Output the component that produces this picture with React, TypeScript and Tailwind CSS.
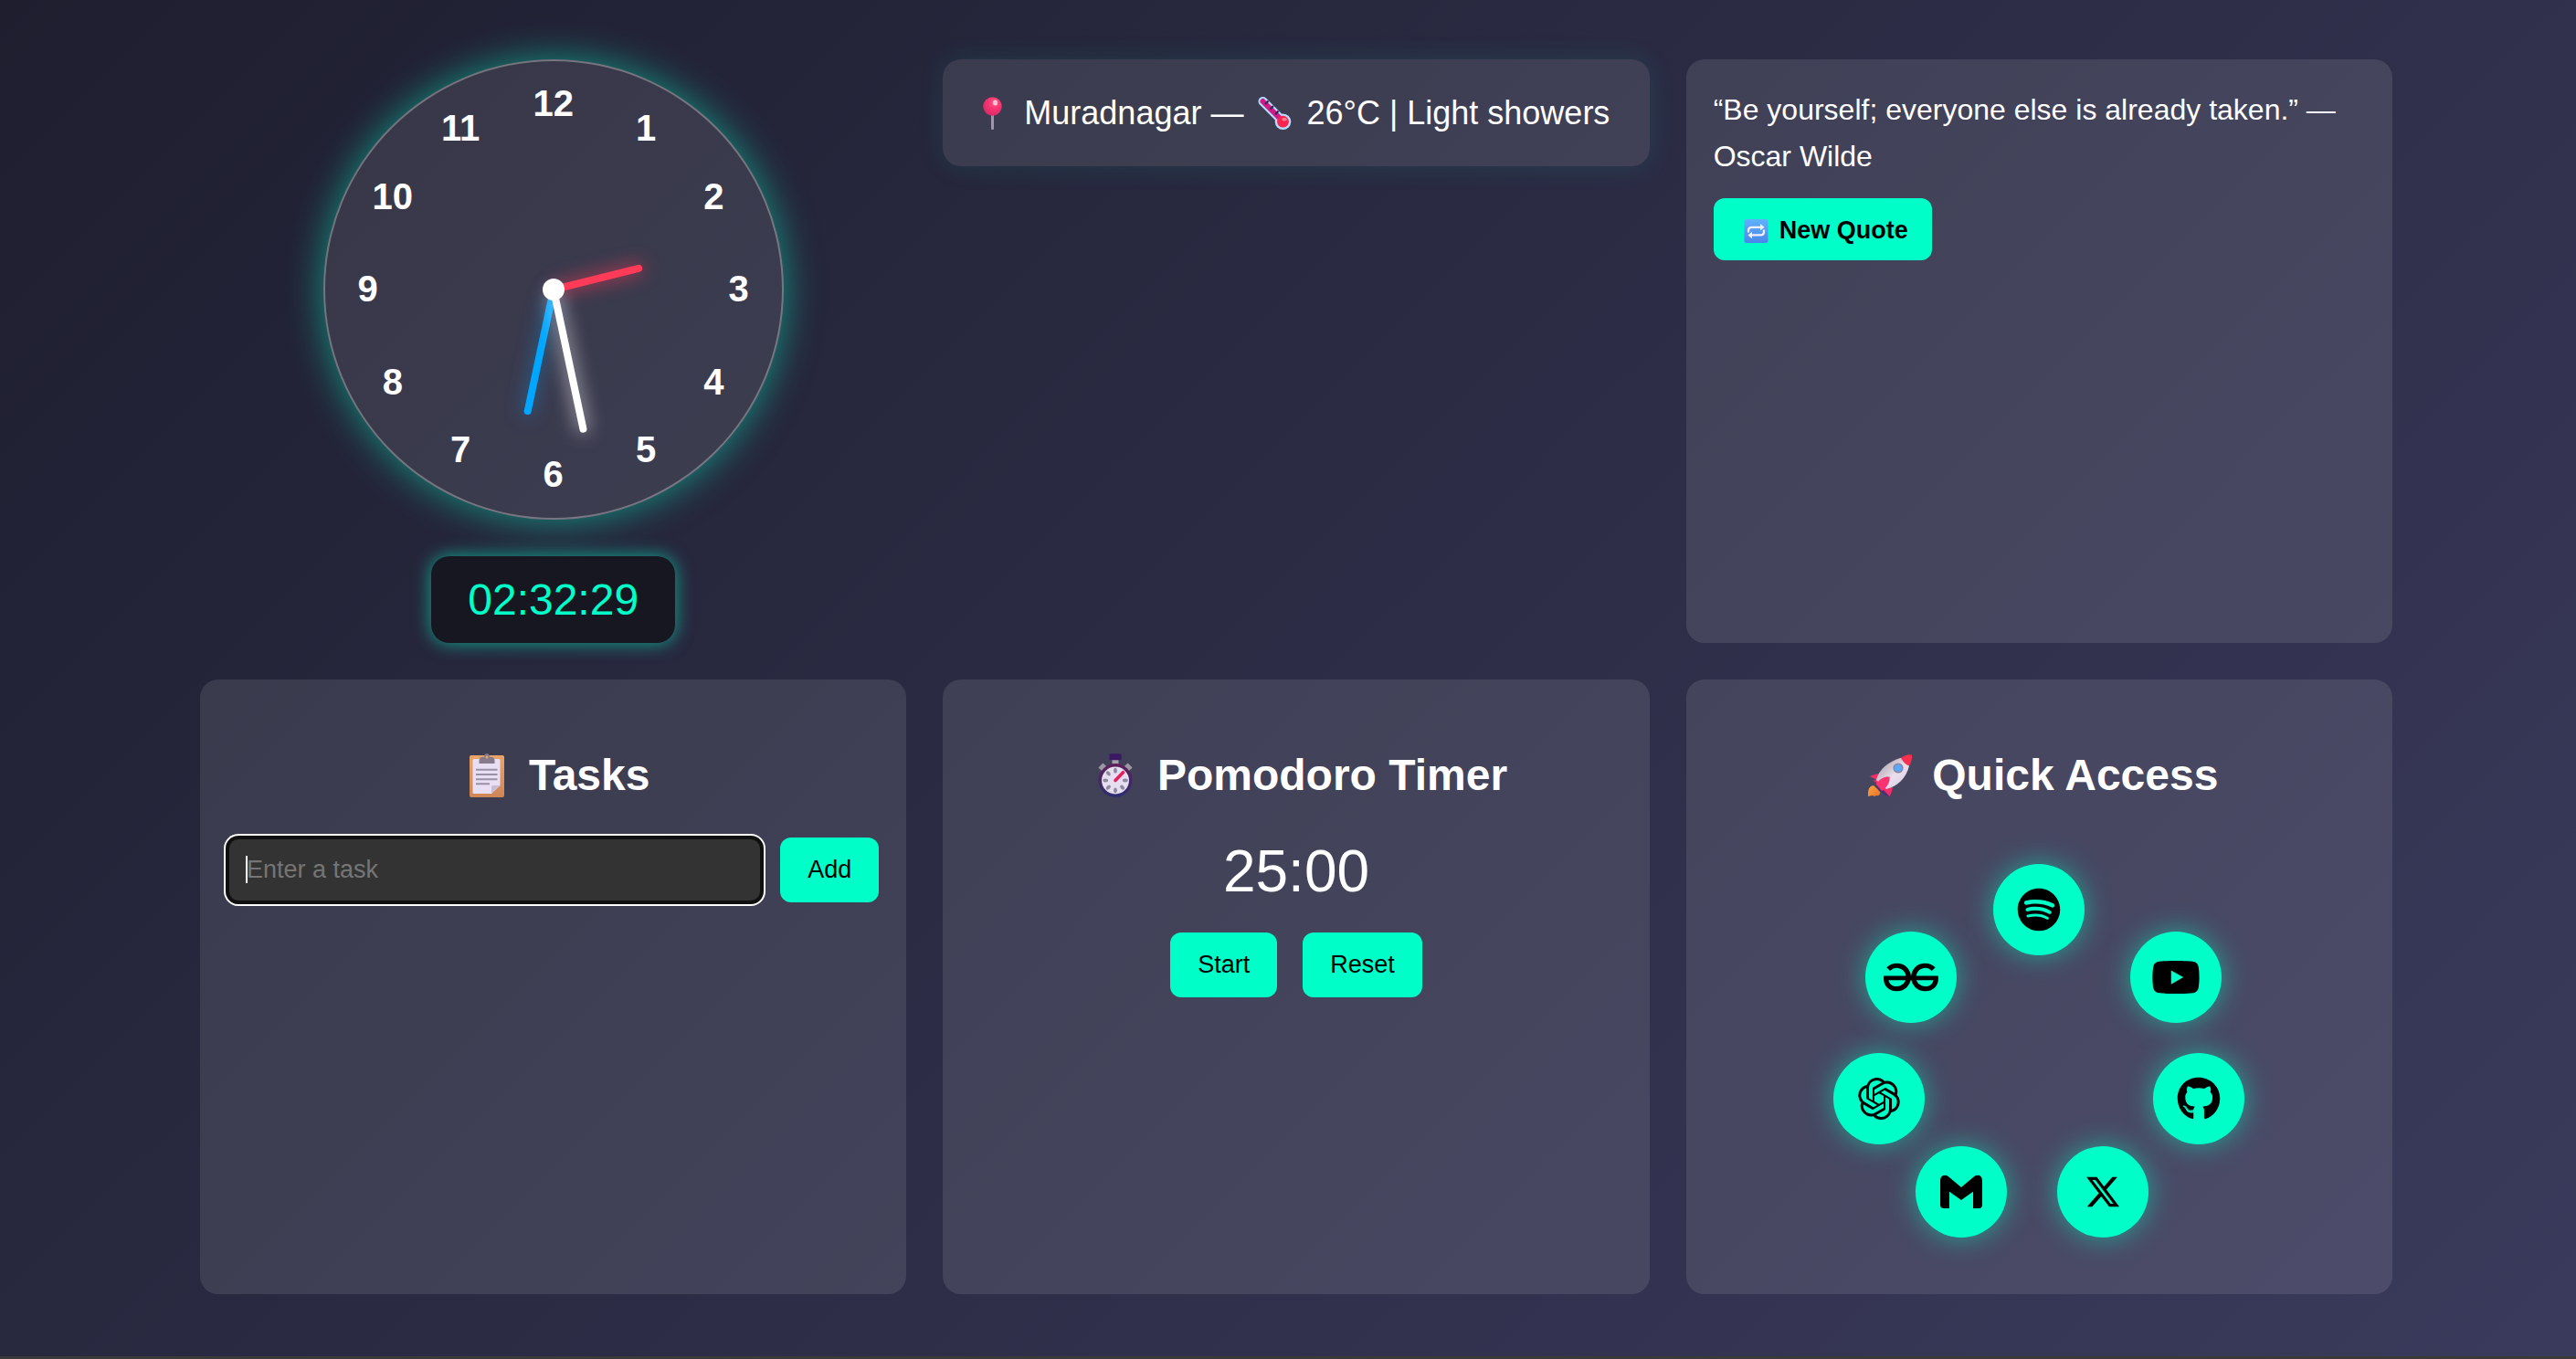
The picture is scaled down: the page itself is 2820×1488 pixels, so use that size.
import type { ReactNode } from "react";
import { FaGithub, FaSpotify, FaXTwitter, FaYoutube } from "react-icons/fa6";
import { SiGeeksforgeeks, SiOpenai } from "react-icons/si";

const NUMBERS = [1, 2, 3, 4, 5, 6, 7, 8, 9, 10, 11, 12];
const CARD = "rounded-[20px] bg-white/10";
const BUTTON = "h-[71px] rounded-xl bg-[#00ffc8] px-[30px] text-[27px] leading-[31px] text-black";

function PinIcon() {
  return (
    <svg viewBox="0 0 49 36" className="h-9 w-[49px] shrink-0" aria-hidden="true">
      <defs>
        <radialGradient id="pin" cx="0.62" cy="0.3" r="0.75">
          <stop offset="0" stopColor="#ff5a86" />
          <stop offset="0.5" stopColor="#f5336f" />
          <stop offset="1" stopColor="#d92b66" />
        </radialGradient>
      </defs>
      <rect x="23" y="18" width="3" height="18" rx="1.2" fill="#a394ae" />
      <circle cx="24.5" cy="10.5" r="10.2" fill="url(#pin)" />
      <ellipse cx="27.5" cy="6.5" rx="2.6" ry="2.9" fill="#ffc4d6" />
    </svg>
  );
}

function ThermometerIcon() {
  return (
    <svg viewBox="0 0 49 36" className="h-9 w-[49px] shrink-0" aria-hidden="true">
      <g transform="translate(6.5 0)">
        <path d="M5 5 L27 27" stroke="#b5dcff" strokeWidth="10" strokeLinecap="round" />
        <circle cx="27" cy="27.2" r="8.8" fill="#b5dcff" />
        <path d="M5 5 L26 26" stroke="#d11a86" strokeWidth="6" strokeLinecap="round" />
        <path d="M7.5 8 L11 4.4 M13 13.6 L16.5 10 M18.6 19.2 L22 15.6" stroke="#352551" strokeWidth="2.2" />
        <circle cx="27" cy="27.2" r="6.4" fill="#f8264f" />
        <ellipse cx="28.6" cy="24.8" rx="2.8" ry="1.8" fill="#ff7d93" />
      </g>
    </svg>
  );
}

function RepeatIcon() {
  return (
    <svg viewBox="0 0 35 26" className="h-[26px] w-[35px] shrink-0" aria-hidden="true">
      <defs>
        <linearGradient id="repeat" x1="0" y1="0" x2="0" y2="1">
          <stop offset="0" stopColor="#5fb2fb" />
          <stop offset="1" stopColor="#4a86ea" />
        </linearGradient>
      </defs>
      <rect x="3.5" width="26" height="26" rx="2.5" fill="url(#repeat)" />
      <g fill="none" stroke="#f3eefb" strokeWidth="2.2">
        <path d="M8 14.5 V12.5 Q8 8.8 11.7 8.8 H22" />
        <path d="M25 11.5 V13.5 Q25 17.4 21.3 17.4 H11" />
      </g>
      <path d="M21 5 L25.6 8.8 L21 12.4Z M12 13.8 L7.4 17.4 L12 21.2Z" fill="#f3eefb" />
    </svg>
  );
}

function ClipboardIcon() {
  return (
    <svg viewBox="0 0 66 48" className="h-12 w-[66px] shrink-0" aria-hidden="true">
      <defs>
        <linearGradient id="board" x1="0" y1="0" x2="0" y2="1">
          <stop offset="0" stopColor="#eba56a" />
          <stop offset="1" stopColor="#cf8656" />
        </linearGradient>
      </defs>
      <g transform="translate(9 0)">
        <rect x="5" y="2" width="38" height="46" rx="2" fill="url(#board)" />
        <path d="M10 6 H37 Q38.500 6 38.500 7.500 V35 L29 44 H10 Q8.500 44 8.500 42.500 V7.500 Q8.500 6 10 6Z" fill="#e8dff4" />
        <path d="M38.500 35 L29 44 V36.500 Q29 35 30.500 35Z" fill="#c6bdd3" />
        <path d="M12 17.700 H35.500 M12 23 H35.500 M12 28.300 H35.500 M12 33.300 H27" stroke="#9a90a5" strokeWidth="2" />
        <path d="M15.500 11 V8 Q15.500 3.700 20 3.700 H21 Q21.500 0 24 0 Q26.500 0 27 3.700 H28 Q32.500 3.700 32.500 8 V11Z" fill="#857b8a" />
        <circle cx="24" cy="4" r="1.5" fill="#eba56a" />
      </g>
    </svg>
  );
}

function StopwatchIcon() {
  const ticks = [0, 90, 135, 180, 225, 270, 315];
  return (
    <svg viewBox="0 0 66 48" className="h-12 w-[66px] shrink-0" aria-hidden="true">
      <defs>
        <linearGradient id="rim" x1="0" y1="0" x2="0" y2="1">
          <stop offset="0" stopColor="#5f1f58" />
          <stop offset="1" stopColor="#2c2f70" />
        </linearGradient>
      </defs>
      <g transform="translate(9 0)">
        <rect x="20.500" y="6" width="7" height="6" fill="#a5a0ad" />
        <rect x="17.300" y="0.300" width="13.400" height="7" rx="1.500" fill="#3b1a63" />
        <path d="M7.500 17.500 L12.500 12.500 M40.500 17.500 L35.500 12.500" stroke="#9c98a3" strokeWidth="6" />
        <circle cx="24" cy="29.500" r="18.500" fill="url(#rim)" />
        <circle cx="24" cy="29.500" r="15" fill="#e6dff0" />
        {ticks.map((angle) => (
          <ellipse key={angle} cx="24" cy="18.700" rx="1.900" ry="2.900" fill="#9089a0" transform={`rotate(${angle} 24 29.5)`} />
        ))}
        <path d="M24 29.500 L32.500 20.700" stroke="#e91e5c" strokeWidth="3.600" strokeLinecap="round" />
      </g>
    </svg>
  );
}

function RocketIcon() {
  return (
    <svg viewBox="0 0 66 48" className="h-12 w-[66px] shrink-0" aria-hidden="true">
      <defs>
        <linearGradient id="hull" x1="0" y1="0" x2="1" y2="1">
          <stop offset="0.200" stopColor="#b9aeb9" />
          <stop offset="0.550" stopColor="#e9dfee" />
          <stop offset="1" stopColor="#d9cbe6" />
        </linearGradient>
        <linearGradient id="flame" x1="0" y1="0" x2="1" y2="1">
          <stop offset="0" stopColor="#ffa340" />
          <stop offset="1" stopColor="#e8732a" />
        </linearGradient>
      </defs>
      <g transform="translate(9 0)">
        <path d="M0 47 C0 41 0 36 6 35 L13.500 42 C13 46 11 46.500 9 46 L7 47 L5 46Z" fill="url(#flame)" />
        <path d="M2 25 C7 22.500 11 22 16 22 L27 35 C27 39 25.500 43.500 23.500 47 L12 36 L6 30 L8.500 28.500Z" fill="#f32d67" />
        <path d="M7 30 L23 46.500 L21.500 47 L12 41Z" fill="#4b2f78" />
        <path d="M36 4.700 C22 9 12 17 9 29 L20 39 C32 36 42 27 45 13.500Z" fill="url(#hull)" />
        <path d="M36 4.700 C40 2 44 0.500 48 1.500 C48.500 5 47.500 9.500 45 13.500 C41 12 38 9 36 4.700Z" fill="#f8304f" />
        <circle cx="33" cy="16" r="5.600" fill="#8c8598" />
        <circle cx="33" cy="16" r="4" fill="#5aa7ff" />
        <path d="M8.500 33.500 C13 27.500 18 25 23.500 25.500 C24.500 31 21 37 15 41Z" fill="#fb3270" />
      </g>
    </svg>
  );
}

function GmailIcon() {
  return (
    <svg viewBox="0 0 138 108" className="h-9 w-[46px]" aria-hidden="true">
      <path d="M0 97V17C0 0 15 -6 27 4L69 39L111 4C123 -6 138 0 138 17V97a11 11 0 0 1 -11 11H108V53L69 81L30 53V108H11A11 11 0 0 1 0 97Z" />
    </svg>
  );
}

function Hand({ angle, className }: { angle: number; className: string }) {
  return (
    <div
      className={`absolute bottom-1/2 left-1/2 -ml-1 w-2 origin-bottom rounded-full ${className}`}
      style={{ transform: `rotate(${angle}deg)` }}
    />
  );
}

function Clock() {
  return (
    <section aria-label="Clock" className="flex flex-col items-center gap-10">
      <div className="relative size-[504px] rounded-full border-2 border-white/30 bg-white/10 shadow-[0_0_40px_rgba(0,255,200,0.5)]">
        {NUMBERS.map((n) => (
          <span
            key={n}
            className="absolute -translate-x-1/2 -translate-y-1/2 pb-[3px] text-[40px] leading-[46px] font-bold"
            style={{
              left: `${50 + 40.6 * Math.sin((n * Math.PI) / 6)}%`,
              top: `${50 - 40.6 * Math.cos((n * Math.PI) / 6)}%`,
            }}
          >
            {n}
          </span>
        ))}
        <Hand angle={192} className="h-[140px] bg-[#00a6ff] shadow-[0_0_20px_rgba(0,166,255,0.5)]" />
        <Hand angle={168} className="h-[160px] bg-white shadow-[0_0_20px_rgba(255,255,255,0.8)]" />
        <Hand angle={76} className="h-[100px] bg-[#ff3b57] shadow-[0_0_20px_rgba(255,59,87,0.9)]" />
        <div className="absolute top-1/2 left-1/2 size-6 -translate-1/2 rounded-full bg-white" />
      </div>
      <time className="rounded-[20px] bg-[#171722] px-10 py-5 text-[48px] leading-[55px] text-[#00ffc8] shadow-[0_0_20px_rgba(0,255,200,0.6)]">
        02:32:29
      </time>
    </section>
  );
}

function Heading({ icon, children }: { icon: ReactNode; children: ReactNode }) {
  return (
    <h2 className="mb-10 flex items-center justify-center gap-[13px] text-[48px] leading-[56px] font-bold">
      {icon}
      {children}
    </h2>
  );
}

const LINKS = [
  { name: "Spotify", place: "left-[175px] top-0", icon: <FaSpotify className="size-12" /> },
  { name: "YouTube", place: "left-[325px] top-[74px]", icon: <FaYoutube className="size-[54px]" /> },
  { name: "GitHub", place: "left-[350px] top-[207px]", icon: <FaGithub className="size-12" /> },
  { name: "X", place: "left-[245px] top-[309px]", icon: <FaXTwitter className="size-10" /> },
  { name: "Gmail", place: "left-[90px] top-[309px]", icon: <GmailIcon /> },
  { name: "ChatGPT", place: "left-0 top-[207px]", icon: <SiOpenai className="size-[46px]" /> },
  { name: "GeeksforGeeks", place: "left-[35px] top-[74px]", icon: <SiGeeksforgeeks className="size-[60px]" /> },
];

export default function App() {
  return (
    <div className="flex min-h-screen flex-col border-b-[3px] border-[#3a3a3a] bg-[linear-gradient(135deg,#1e1e2f,#3a3a5c)] pt-[65px] pb-16 pl-[18px] font-['Liberation_Sans',Arial,sans-serif] text-white">
      <main className="mx-auto grid w-full max-w-[2400px] grid-cols-3 gap-10">
        <Clock />

        <section
          aria-label="Weather"
          className={`flex items-center self-start px-[30px] py-[38px] text-[36px] leading-[41px] shadow-[0_0_30px_rgba(0,255,200,0.1)] ${CARD}`}
        >
          <PinIcon />
          <span className="ml-[10px]">Muradnagar —</span>
          <span className="ml-[10px] flex">
            <ThermometerIcon />
          </span>
          <span className="ml-[10px]">26°C | Light showers</span>
        </section>

        <section aria-label="Quote" className={`p-[30px] ${CARD}`}>
          <p className="text-[32px] leading-[51px]">“Be yourself; everyone else is already taken.” — Oscar Wilde</p>
          <button
            type="button"
            className="mt-5 flex h-[68px] items-center gap-[7px] rounded-xl bg-[#00ffc8] pt-[3px] pr-[26px] pl-[30px] text-[27px] leading-[31px] font-bold text-black"
          >
            <RepeatIcon />
            New Quote
          </button>
        </section>

        <section className={`px-[30px] pt-[77px] pb-[30px] ${CARD}`}>
          <Heading icon={<ClipboardIcon />}>Tasks</Heading>
          <form className="flex gap-5" onSubmit={(e) => e.preventDefault()}>
            <div className="relative flex-1">
              <input
                type="text"
                aria-label="Enter a task"
                placeholder="Enter a task"
                className="h-[71px] w-full rounded-xl border-2 border-[#101010] bg-[#333] px-[19px] text-[27px] text-white shadow-[0_0_0_2px_#101010,0_0_0_4px_#fff] outline-none placeholder:text-[#757575]"
              />
              <span className="absolute top-5 left-5 h-[30px] w-0.5 bg-white" />
            </div>
            <button type="submit" className={BUTTON}>
              Add
            </button>
          </form>
        </section>

        <section className={`px-[30px] pt-[77px] pb-[30px] ${CARD}`}>
          <Heading icon={<StopwatchIcon />}>Pomodoro Timer</Heading>
          <p className="text-center text-[64px] leading-[74px]">25:00</p>
          <div className="mt-[30px] flex justify-center gap-7">
            <button type="button" className={BUTTON}>
              Start
            </button>
            <button type="button" className={BUTTON}>
              Reset
            </button>
          </div>
        </section>

        <section className={`px-[30px] pt-[77px] pb-[61px] ${CARD}`}>
          <Heading icon={<RocketIcon />}>Quick Access</Heading>
          <nav aria-label="Quick access" className="relative mx-auto mt-[69px] h-[410px] w-[450px]">
            {LINKS.map((link) => (
              <a
                key={link.name}
                href="#"
                aria-label={link.name}
                className={`absolute flex size-[100px] items-center justify-center rounded-full bg-[#00ffc8] text-black shadow-[0_0_30px_rgba(0,255,200,0.5)] ${link.place}`}
              >
                {link.icon}
              </a>
            ))}
          </nav>
        </section>
      </main>
    </div>
  );
}
